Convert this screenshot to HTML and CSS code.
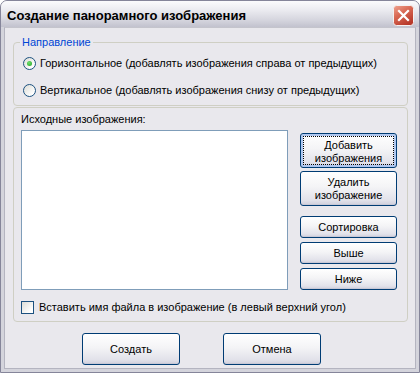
FILE: index.html
```html
<!DOCTYPE html>
<html lang="ru">
<head>
    <meta charset="UTF-8">
    <title>Создание панорамного изображения</title>
    <link rel="stylesheet" href="styles.css">
</head>
<body>
    <div class="window">
        <div class="titlebar">
            <span class="title">Создание панорамного изображения</span>
            <span class="close">
                <svg width="21" height="21" viewBox="0 0 21 21">
                    <defs>
                        <linearGradient id="redg" x1="0" y1="0" x2="0.6" y2="1">
                            <stop offset="0" stop-color="#f0a592"/>
                            <stop offset="0.45" stop-color="#d96a55"/>
                            <stop offset="1" stop-color="#b8392a"/>
                        </linearGradient>
                    </defs>
                    <rect x="0.5" y="0.5" width="20" height="20" rx="3" fill="url(#redg)" stroke="#f4f1f1"/>
                    <path d="M6 6 L15 15 M15 6 L6 15" stroke="#fff" stroke-width="2.2" stroke-linecap="square"/>
                </svg>
            </span>
        </div>
        <div class="client">
            <fieldset class="group direction">
                <legend>Направление</legend>
                <label class="option">
                    <span class="radio checked"></span>
                    Горизонтальное (добавлять изображения справа от предыдущих)
                </label>
                <label class="option">
                    <span class="radio"></span>
                    Вертикальное (добавлять изображения снизу от предыдущих)
                </label>
            </fieldset>

            <div class="group sources">
                <div class="caption">Исходные изображения:</div>
                <div class="sources-row">
                    <div class="listbox"></div>
                    <div class="side-buttons">
                        <button class="btn tall focused"><span>Добавить<br>изображения</span></button>
                        <button class="btn tall">Удалить<br>изображение</button>
                        <button class="btn small spaced">Сортировка</button>
                        <button class="btn small">Выше</button>
                        <button class="btn small">Ниже</button>
                    </div>
                </div>
                <label class="option check-row">
                    <span class="checkbox"></span>
                    Вставить имя файла в изображение (в левый верхний угол)
                </label>
            </div>

            <div class="actions">
                <button class="btn main">Создать</button>
                <button class="btn main">Отмена</button>
            </div>
        </div>
    </div>
</body>
</html>
```

FILE: styles.css
```css
body {
    margin: 0;
    padding: 0;
    background: #fff;
    font-family: "Liberation Sans", Arial, sans-serif;
    font-size: 11px;
    color: #000;
}

.window {
    width: 420px;
    height: 373px;
    box-sizing: border-box;
    display: flex;
    flex-direction: column;
    border: 1px solid #85859a;
    border-radius: 7px 7px 0 0;
    background: #d4d4dc;
    padding: 0 3px 3px 3px;
}

.titlebar {
    height: 26px;
    display: flex;
    align-items: center;
    justify-content: space-between;
    padding: 0 5px 0 3px;
    margin: 0 -3px;
    border-radius: 6px 6px 0 0;
    background: linear-gradient(#fbfbfd, #ebebf0 35%, #d4d4dd 75%, #c2c2ce);
}

.title {
    font-weight: bold;
    font-size: 13px;
    color: #000;
    padding-left: 3px;
    padding-top: 2px;
}

.close {
    display: flex;
    margin-top: 3px;
}

.client {
    flex: 1;
    display: flex;
    flex-direction: column;
    background: #e9e8ed;
    border: 1px solid #b4b4c0;
    border-top-color: #c4c4cc;
}

.group {
    margin: 0 7px 0 8px;
    border: 1px solid #cfcfc4;
    border-radius: 4px;
}

.direction {
    margin-top: 8px;
    padding: 0 0 0 9px;
    height: 68px;
    box-sizing: content-box;
}

.direction legend {
    color: #0046d5;
    padding: 0 2px;
    margin-left: -3px;
    line-height: 13px;
}

.option {
    display: flex;
    align-items: center;
    gap: 4px;
    line-height: 13px;
}

.direction .option {
    margin-top: 8px;
}

.direction .option + .option {
    margin-top: 14px;
}

.radio {
    width: 11px;
    height: 11px;
    border: 1px solid #1c5180;
    border-radius: 50%;
    background: linear-gradient(135deg, #dcdcd6, #fff 80%);
    position: relative;
}

.radio.checked::after {
    content: "";
    position: absolute;
    left: 3px;
    top: 3px;
    width: 5px;
    height: 5px;
    border-radius: 50%;
    background: radial-gradient(circle at 40% 35%, #6fe06f, #21a121);
}

.sources {
    margin-top: 1px;
    padding: 5px 10px 7px 7px;
}

.caption {
    line-height: 13px;
}

.sources-row {
    display: flex;
    gap: 12px;
    margin-top: 4px;
}

.listbox {
    width: 266px;
    height: 158px;
    background: #fff;
    border: 1px solid #7f9db9;
}

.side-buttons {
    display: flex;
    flex-direction: column;
    gap: 3px;
    padding-top: 3px;
}

.btn {
    font-family: "Liberation Sans", Arial, sans-serif;
    font-size: 11px;
    color: #000;
    width: 97px;
    padding: 0;
    border: 1px solid #003c74;
    border-radius: 3px;
    background: linear-gradient(#ffffff, #f4f4f6 45%, #e2e2ea 85%, #cfcfdc);
    box-shadow: inset 0 -1px 0 #c8c8d6;
    line-height: 13px;
}

.btn.tall {
    height: 35px;
}

.btn.small {
    height: 22px;
}

.btn.spaced {
    margin-top: 7px;
}

.side-buttons .btn.small + .btn.small {
    margin-top: 1px;
}

.btn.focused {
    box-shadow: inset 0 0 0 2px #b0c8f0;
    padding: 2px;
}

.btn.focused span {
    display: block;
    height: 100%;
    box-sizing: border-box;
    padding-top: 3px;
    outline: 1px dotted #000;
    outline-offset: -1px;
}

.check-row {
    margin-top: 11px;
    gap: 5px;
}

.checkbox {
    width: 11px;
    height: 11px;
    border: 1px solid #1c5180;
    background: linear-gradient(135deg, #dcdcd6, #fff 80%);
}

.actions {
    display: flex;
    gap: 43px;
    padding-left: 77px;
    margin-top: 11px;
}

.btn.main {
    width: 98px;
    height: 32px;
}
```
